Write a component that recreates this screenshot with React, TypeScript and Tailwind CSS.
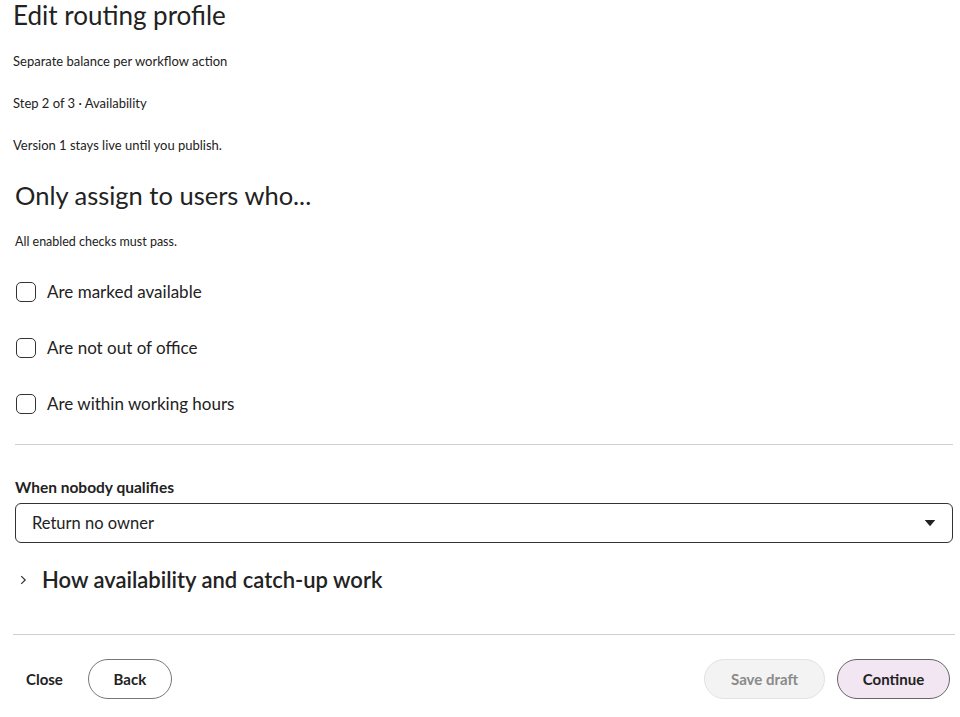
import React, { useState } from "react";

const checks = [
  "Are marked available",
  "Are not out of office",
  "Are within working hours",
];

export default function App() {
  const [checked, setChecked] = useState<boolean[]>([false, false, false]);
  const [open, setOpen] = useState(false);

  return (
    <div
      className="w-[960px] h-[717px] bg-white text-[#222] overflow-hidden"
      style={{ fontFamily: "Lato, 'Noto Sans', sans-serif" }}
    >
      {/* Header */}
      <div className="px-[13px]">
        <h1 className="text-[26px] leading-[30px] font-normal">Edit routing profile</h1>
        <p className="text-[13px] leading-[16px] mt-[23px]">Separate balance per workflow action</p>
        <p className="text-[13px] leading-[16px] mt-[26px]">Step 2 of 3 · Availability</p>
        <p className="text-[13px] leading-[16px] mt-[26px]">Version 1 stays live until you publish.</p>
      </div>

      {/* Body */}
      <div className="pl-[15px] pr-[7px] mt-[27px]">
        <h2 className="text-[25.5px] leading-[30px] font-normal">Only assign to users who...</h2>
        <p className="text-[12.5px] leading-[14px] mt-[25px]">All enabled checks must pass.</p>

        <div className="flex flex-col gap-[36px] mt-[33px]">
          {checks.map((c, i) => (
            <label key={c} className="flex items-center gap-[11px] h-[20px] cursor-pointer">
              <button
                type="button"
                onClick={() =>
                  setChecked((v) => v.map((x, j) => (j === i ? !x : x)))
                }
                className="w-[20px] h-[20px] ml-[1px] rounded-[5px] border-[1.5px] border-[#333] bg-white flex items-center justify-center"
              >
                {checked[i] && (
                  <svg viewBox="0 0 16 16" className="w-3 h-3">
                    <path d="M3 8.5l3 3 7-7" fill="none" stroke="#222" strokeWidth="2" />
                  </svg>
                )}
              </button>
              <span className="text-[17px]">{c}</span>
            </label>
          ))}
        </div>

        <div className="border-t border-[#d0d0d0] mt-[30px]" />

        <div className="mt-[33px]">
          <div className="text-[15.5px] font-bold leading-[18px]">When nobody qualifies</div>
          <div className="mt-[7px] h-[40px] border border-[#333] rounded-[6px] flex items-center justify-between pl-[16px] pr-[16px]">
            <span className="text-[16.5px]">Return no owner</span>
            <svg viewBox="0 0 12 8" className="w-[12px] h-[7px]">
              <path d="M0 0h12L6 7z" fill="#222" />
            </svg>
          </div>
        </div>

        <button
          type="button"
          onClick={() => setOpen((v) => !v)}
          className="mt-[24px] flex items-center gap-[12px] pl-[1px]"
        >
          <svg viewBox="0 0 16 16" className="w-[14px] h-[14px]">
            <path d="M6 3.5l4.5 4.5L6 12.5" fill="none" stroke="#333" strokeWidth="1.4" />
          </svg>
          <span className="text-[22px] font-semibold leading-[26px]">How availability and catch-up work</span>
        </button>
        {open && (
          <p className="text-[14px] mt-2 pl-[28px]">
            Users who are unavailable are skipped, and their balance catches up when they return.
          </p>
        )}
      </div>

      {/* Footer */}
      <div className="ml-[13px] mr-[5px] mt-[41px] border-t border-[#cfcfcf]" />
      <div className="flex items-center justify-between pl-[10px] pr-[10px] mt-[24px]">
        <div className="flex items-center gap-[9px]">
          <button className="text-[15px] font-bold px-[16px] h-[40px]">Close</button>
          <button className="text-[15px] font-bold h-[40px] w-[84px] rounded-full border border-[#777]">
            Back
          </button>
        </div>
        <div className="flex items-center gap-[12px]">
          <button
            disabled
            className="text-[15px] font-bold h-[40px] w-[121px] rounded-full border border-[#e2e2e2] bg-[#f3f3f3] text-[#8a8a8a]"
          >
            Save draft
          </button>
          <button className="text-[15px] font-bold h-[40px] w-[113px] rounded-full border border-[#666] bg-[#f1e6f1]">
            Continue
          </button>
        </div>
      </div>
    </div>
  );
}
